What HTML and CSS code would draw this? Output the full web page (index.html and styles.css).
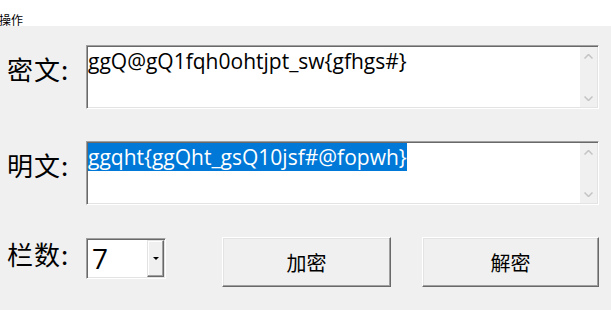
FILE: index.html
```html
<!DOCTYPE html>
<html lang="zh-CN">
<head>
    <meta charset="UTF-8">
    <meta name="viewport" content="width=device-width, initial-scale=1.0">
    <title>栅栏密码</title>
    <link rel="stylesheet" href="styles.css">
</head>
<body>

    <div class="menubar">
        <span class="menu-item">操作</span>
    </div>

    <div class="form">
        <div class="row">
            <label class="field-label">密文:</label>
            <div class="memo">
                <div class="memo-text">ggQ@gQ1fqh0ohtjpt_sw{gfhgs#}</div>
                <div class="scrollbar">
                    <svg width="9" height="5" viewBox="0 0 9 5"><path d="M0.5 4.5 L4.5 0.5 L8.5 4.5" fill="none" stroke="#c4c4c4" stroke-width="1.5"/></svg>
                    <svg width="9" height="5" viewBox="0 0 9 5"><path d="M0.5 0.5 L4.5 4.5 L8.5 0.5" fill="none" stroke="#c4c4c4" stroke-width="1.5"/></svg>
                </div>
            </div>
        </div>

        <div class="row">
            <label class="field-label">明文:</label>
            <div class="memo">
                <div class="memo-text"><span class="selected">ggqht{ggQht_gsQ10jsf#@fopwh}</span></div>
                <div class="scrollbar">
                    <svg width="9" height="5" viewBox="0 0 9 5"><path d="M0.5 4.5 L4.5 0.5 L8.5 4.5" fill="none" stroke="#c4c4c4" stroke-width="1.5"/></svg>
                    <svg width="9" height="5" viewBox="0 0 9 5"><path d="M0.5 0.5 L4.5 4.5 L8.5 0.5" fill="none" stroke="#c4c4c4" stroke-width="1.5"/></svg>
                </div>
            </div>
        </div>

        <div class="row row-controls">
            <label class="field-label">栏数:</label>
            <div class="combo">
                <span class="combo-value">7</span>
                <span class="combo-button"><span class="combo-arrow"></span></span>
            </div>
            <button class="btn btn-encrypt">加密</button>
            <button class="btn btn-decrypt">解密</button>
        </div>
    </div>

</body>
</html>
```

FILE: styles.css
```css
body {
    margin: 0;
    background-color: #f0f0f0;
    font-family: "Noto Sans CJK SC", "Noto Sans", sans-serif;
    color: #000;
}

.menubar {
    height: 26px;
    box-sizing: border-box;
    padding-top: 6px;
    background: #fff;
}

.menu-item {
    display: inline-block;
    margin-left: -1px;
    font-size: 12px;
    line-height: 14px;
}

.form {
    display: flex;
    flex-direction: column;
    gap: 32px;
    padding-top: 19px;
}

.row {
    display: flex;
    align-items: flex-start;
}

.field-label {
    width: 86px;
    box-sizing: border-box;
    padding-left: 7px;
    padding-top: 11px;
    font-size: 26px;
    line-height: 26px;
    letter-spacing: 1px;
}

.row-controls .field-label {
    padding-top: 4px;
}

.memo {
    display: flex;
    width: 513px;
    height: 64px;
    box-sizing: border-box;
    background: #fff;
    border: 1px solid;
    border-color: #a0a0a0 #fff #fff #a0a0a0;
    box-shadow: inset 1px 1px #696969, inset -1px -1px #e3e3e3;
}

.memo-text {
    flex: 1;
    padding: 2px 0 0 1px;
    font-family: "Open Sans", "Noto Sans", sans-serif;
    font-size: 21px;
    line-height: 27px;
    white-space: nowrap;
}

.selected {
    background: #0078d7;
    color: #fff;
}

.scrollbar {
    width: 17px;
    margin: 1px 1px 1px 0;
    background: #f0f0f0;
    display: flex;
    flex-direction: column;
    align-items: center;
    justify-content: space-between;
    padding: 7px 0 6px;
    box-sizing: border-box;
}

.scrollbar svg {
    display: block;
}

.combo {
    display: flex;
    width: 80px;
    height: 41px;
    margin-top: 1px;
    box-sizing: border-box;
    background: #fff;
    border: 1px solid;
    border-color: #a0a0a0 #fff #fff #a0a0a0;
    box-shadow: inset 1px 1px #696969, inset -1px -1px #e3e3e3;
    padding: 1px;
}

.combo-value {
    flex: 1;
    padding-left: 4px;
    font-family: "Open Sans", "Noto Sans", sans-serif;
    font-size: 28px;
    line-height: 37px;
}

.combo-button {
    width: 17px;
    box-sizing: border-box;
    background: #f0f0f0;
    border: 1px solid;
    border-color: #e3e3e3 #696969 #696969 #e3e3e3;
    box-shadow: inset -1px -1px #a0a0a0, inset 1px 1px #fff;
    display: flex;
    align-items: center;
    justify-content: center;
}

.combo-arrow {
    width: 0;
    height: 0;
    border-left: 3px solid transparent;
    border-right: 3px solid transparent;
    border-top: 3px solid #000;
}

.btn {
    height: 50px;
    box-sizing: border-box;
    background: #f0f0f0;
    border: 1px solid;
    border-color: #fff #696969 #696969 #fff;
    box-shadow: inset -1px -1px #a0a0a0, inset 1px 1px #e3e3e3;
    font-family: "Noto Sans CJK SC", sans-serif;
    font-size: 20px;
    color: #000;
    padding: 0;
}

.btn-encrypt {
    width: 169px;
    margin-left: 56px;
}

.btn-decrypt {
    width: 177px;
    margin-left: 31px;
}
```
